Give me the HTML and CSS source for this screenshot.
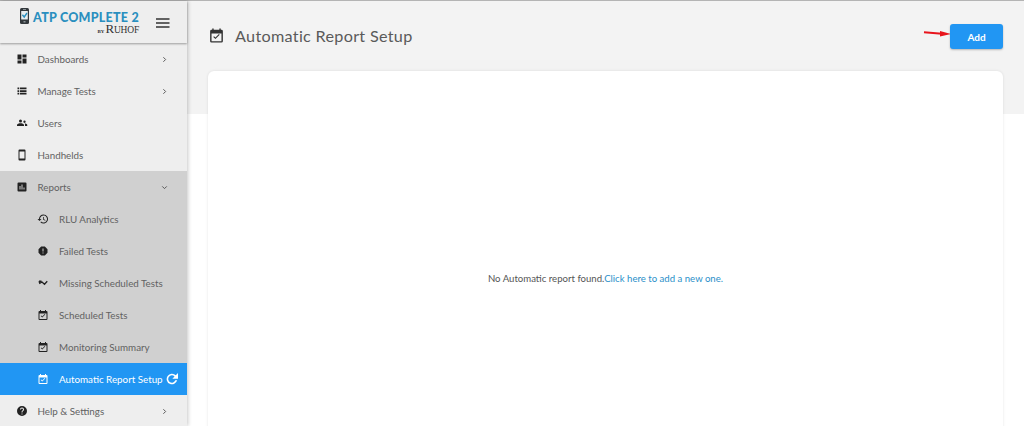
FILE: index.html
```html
<!DOCTYPE html>
<html lang="en">
<head>
<meta charset="utf-8">
<title>Automatic Report Setup</title>
<link rel="stylesheet" href="styles.css">
</head>
<body>
<div class="app">
  <aside class="sidebar">
    <div class="brand">
      <svg class="brand-icon" viewBox="0 0 10 16"><rect x="0" y="0" width="9" height="16" rx="1.500" fill="#33383c"/><rect x="1.200" y="3" width="6.600" height="8.500" fill="#e8eef0"/><path d="M2.400 6.800l1.800 2.200 2.800-4" fill="none" stroke="#2a8fbf" stroke-width="1.400"/><rect x="3" y="1" width="3" height="1" fill="#8a9296"/><rect x="3.500" y="13" width="2" height="1.500" fill="#8a9296"/></svg>
      <div class="brand-text">
        <div class="brand-name">ATP COMPLETE 2</div>
        <div class="brand-by"><span class="by">BY</span><span class="ruhof"><span class="ruhof-r">R</span>UHOF</span></div>
      </div>
      <svg class="burger" viewBox="0 0 14 10"><path d="M0 1h13.500M0 5h13.500M0 9h13.500" stroke="#333" stroke-width="1.400"/></svg>
    </div>
    <nav class="menu">
      <a class="item"><svg class="ico" viewBox="0 0 24 24"><path d="M3 13h8V3H3zm0 8h8v-6H3zm10 0h8V11h-8zm0-18v6h8V3z"/></svg><span class="label">Dashboards</span><svg class="chev" viewBox="0 0 24 24"><path d="M9 6l6 6-6 6"/></svg></a>
      <a class="item"><svg class="ico" viewBox="0 0 24 24"><path d="M3 5h3.500v3.500H3zm5 0h13v3.500H8zm-5 5.300h3.500v3.500H3zm5 0h13v3.500H8zm-5 5.200h3.500V19H3zm5 0h13V19H8z"/></svg><span class="label">Manage Tests</span><svg class="chev" viewBox="0 0 24 24"><path d="M9 6l6 6-6 6"/></svg></a>
      <a class="item"><svg class="ico" viewBox="0 0 24 24"><circle cx="9" cy="8" r="3"/><circle cx="17" cy="9.500" r="2.300"/><path d="M2 18v-2c0-2.300 4-3.500 7-3.500s7 1.200 7 3.500v2zm15.500-5c2.500 0 5 1 5 3v2H18v-2.500c0-1-.3-1.800-.5-2.500z"/></svg><span class="label">Users</span></a>
      <a class="item"><svg class="ico" viewBox="0 0 24 24"><path d="M7 1h10a2 2 0 0 1 2 2v18a2 2 0 0 1-2 2H7a2 2 0 0 1-2-2V3a2 2 0 0 1 2-2zm0 4v14h10V5z"/></svg><span class="label">Handhelds</span></a>
      <div class="group">
        <a class="item"><svg class="ico" viewBox="0 0 24 24"><path d="M5 3h14a2 2 0 0 1 2 2v14a2 2 0 0 1-2 2H5a2 2 0 0 1-2-2V5a2 2 0 0 1 2-2zm2 7v7h2v-7zm4-3v10h2V7zm4 6v4h2v-4z"/></svg><span class="label">Reports</span><svg class="chev" viewBox="0 0 24 24"><path d="M6 9l6 6 6-6"/></svg></a>
        <a class="item sub"><svg class="ico" viewBox="0 0 24 24"><path d="M13 3a9 9 0 0 0-9 9H1l4 4 4-4H6a7 7 0 1 1 2.100 5l-1.400 1.400A9 9 0 1 0 13 3zm-1 5v5l4.300 2.500.7-1.200-3.500-2.100V8z"/></svg><span class="label">RLU Analytics</span></a>
        <a class="item sub"><svg class="ico" viewBox="0 0 24 24"><path d="M15.700 3H8.300L3 8.300v7.400L8.300 21h7.400l5.300-5.300V8.300zM13 17h-2v-2h2zm0-4h-2V7h2z"/></svg><span class="label">Failed Tests</span></a>
        <a class="item sub"><svg class="ico" viewBox="0 0 24 24"><path d="M4 8.500h5M4 8.500l1.500 4 4.500-2.500 5 4.500 5.500-6" fill="none" stroke="#222" stroke-width="2.600"/></svg><span class="label">Missing Scheduled Tests</span></a>
        <a class="item sub"><svg class="ico" viewBox="0 0 24 24"><path d="M19 4h-1V2h-2v2H8V2H6v2H5a2 2 0 0 0-2 2v14a2 2 0 0 0 2 2h14a2 2 0 0 0 2-2V6a2 2 0 0 0-2-2zm0 16H5V9h14zm-2.500-8.900l-1.100-1.100-4.900 4.900-2-2-1.100 1.100 3.100 3.100z"/></svg><span class="label">Scheduled Tests</span></a>
        <a class="item sub"><svg class="ico" viewBox="0 0 24 24"><path d="M19 4h-1V2h-2v2H8V2H6v2H5a2 2 0 0 0-2 2v14a2 2 0 0 0 2 2h14a2 2 0 0 0 2-2V6a2 2 0 0 0-2-2zm0 16H5V9h14zm-2.500-8.900l-1.100-1.100-4.900 4.900-2-2-1.100 1.100 3.100 3.100z"/></svg><span class="label">Monitoring Summary</span></a>
        <a class="item sub active"><svg class="ico" viewBox="0 0 24 24"><path d="M19 4h-1V2h-2v2H8V2H6v2H5a2 2 0 0 0-2 2v14a2 2 0 0 0 2 2h14a2 2 0 0 0 2-2V6a2 2 0 0 0-2-2zm0 16H5V9h14zm-2.500-8.900l-1.100-1.100-4.900 4.900-2-2-1.100 1.100 3.100 3.100z"/></svg><span class="label">Automatic Report Setup</span><svg class="refresh" viewBox="0 0 24 24"><path d="M17.650 6.350A8 8 0 1 0 19.730 14h-2.730A5.500 5.500 0 1 1 15.800 8.200L12.500 11.500H21V3z"/></svg></a>
      </div>
      <a class="item"><svg class="ico" viewBox="0 0 24 24"><path d="M12 2a10 10 0 1 0 0 20 10 10 0 0 0 0-20zm1 17h-2v-2h2zm2-7.700l-.9.900c-.8.700-1.100 1.300-1.100 2.800h-2v-.5c0-1.100.4-2.100 1.200-2.800l1.200-1.300c.4-.3.600-.8.600-1.400a2 2 0 0 0-4 0H8a4 4 0 0 1 8 0c0 .9-.4 1.700-1 2.300z"/></svg><span class="label">Help &amp; Settings</span><svg class="chev" viewBox="0 0 24 24"><path d="M9 6l6 6-6 6"/></svg></a>
    </nav>
  </aside>
  <main class="main">
    <header class="page-head">
      <svg class="head-ico" viewBox="0 0 24 24"><path d="M19 4h-1V2h-2v2H8V2H6v2H5a2 2 0 0 0-2 2v14a2 2 0 0 0 2 2h14a2 2 0 0 0 2-2V6a2 2 0 0 0-2-2zm0 16H5V9h14zm-2.500-8.900l-1.100-1.100-4.900 4.900-2-2-1.100 1.100 3.100 3.100z"/></svg>
      <h1 class="title">Automatic Report Setup</h1>
      <div class="actions">
        <svg class="arrow" viewBox="0 0 30 10"><path d="M1 3.200l18 1.500" stroke="#e8141c" stroke-width="2" fill="none"/><path d="M17 2L28 5l-11 2.500z" fill="#e8141c"/></svg>
        <button class="add">Add</button>
      </div>
    </header>
    <section class="card">
      <p class="empty">No Automatic report found.<a class="link">Click here to add a new one.</a></p>
    </section>
  </main>
</div>
</body>
</html>
```
FILE: styles.css
```css
* { box-sizing: border-box; }
html, body { margin: 0; height: 100%; overflow: hidden; }
body { font-family: "Lato", "Noto Sans", sans-serif; color: #555; background: #fff; }
.app { display: flex; height: 426px; border-top: 1px solid #b4b4b4; }

.sidebar { width: 187px; flex: none; background: #eee; box-shadow: 1px 0 4px rgba(0,0,0,.22); position: relative; z-index: 2; }
.brand { height: 42px; display: flex; align-items: flex-start; padding: 7px 17px 0 20px; box-shadow: 0 1px 2px rgba(0,0,0,.35); }
.brand-icon { width: 10px; height: 16px; flex: none; margin-right: 3px; }
.brand-text { width: 106px; padding-top: 4px; }
.brand-name { font-size: 12.500px; line-height: 11px; font-weight: 900; letter-spacing: .25px; color: #2a8fbf; white-space: nowrap; }
.brand-by { display: flex; justify-content: flex-end; align-items: baseline; gap: 1px; color: #333; font-family: "Liberation Serif", serif; line-height: 12px; }
.by { font-size: 5px; font-weight: 700; }
.ruhof { font-size: 9.500px; letter-spacing: -.2px; }
.ruhof-r { font-size: 13px; }
.burger { width: 14px; height: 10px; margin: 10px 0 0 auto; flex: none; }

.menu { display: flex; flex-direction: column; }
.item { height: 32px; display: flex; align-items: center; padding-left: 15.500px; font-size: 9.800px; color: #626262; white-space: nowrap; }
.item .ico { width: 12px; height: 12px; flex: none; margin-right: 10px; fill: #222; }
.chev { width: 9px; height: 9px; flex: none; margin-left: auto; margin-right: 18px; fill: none; stroke: #555; stroke-width: 2.600; }
.group { background: #d0d0d0; display: flex; flex-direction: column; }
.item.sub { padding-left: 37px; }
.active { background: #2196f3; }
.item.active { color: #fff; }
.item.active .ico { fill: #fff; }
.refresh { width: 16px; height: 16px; flex: none; fill: #fff; margin-left: 1px; }

.main { flex: 1; min-width: 0; background: linear-gradient(#f3f3f3 113px, #fff 113px); padding: 0 21px; }
.page-head { height: 70px; display: flex; align-items: center; }
.head-ico { width: 17px; height: 17px; fill: #333; margin-right: 10px; flex: none; margin-top: -1px; }
.title { margin: -2px 0 0; font-size: 16.200px; font-weight: 400; color: #5a5a5a; letter-spacing: .3px; }
.actions { margin-left: auto; display: flex; align-items: center; }
.arrow { width: 30px; height: 10px; margin-right: -3px; margin-top: -4px; }
.add { width: 53px; height: 25px; border: 0; border-radius: 3px; background: #2196f3; color: #fff; font: 700 10px "Lato", sans-serif; box-shadow: 0 1px 2px rgba(0,0,0,.25); margin-top: 1px; }

.card { height: 360px; background: #fff; border-radius: 6px 6px 0 0; box-shadow: 0 0 3px rgba(0,0,0,.1); padding-top: 201px; text-align: center; }
.empty { margin: 0; font-size: 9.600px; line-height: 14px; color: #555; }
.link { color: #2a8fc9; }
```
